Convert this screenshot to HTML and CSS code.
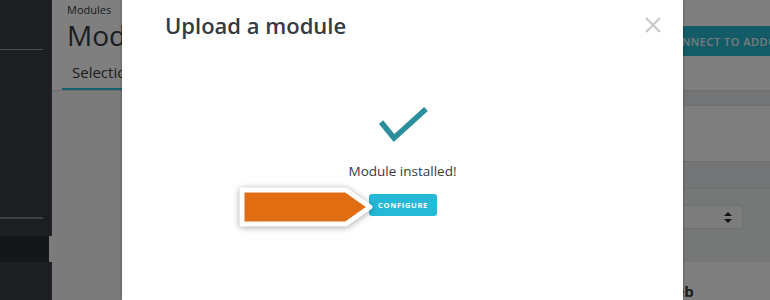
FILE: index.html
```html
<!DOCTYPE html>
<html>
<head>
<meta charset="utf-8">
<link rel="stylesheet" href="styles.css">
</head>
<body>
<div class="page">
  <aside class="sidebar">
    <div class="side-sep first"></div>
    <div class="side-sep second"></div>
    <div class="side-item active"><span class="side-marker"></span></div>
  </aside>
  <main class="main">
    <header class="header">
      <div class="header-left">
        <div class="crumb">Modules</div>
        <h1 class="page-title">Module manager</h1>
        <nav class="tabs"><span class="tab active">Selection</span><span class="tab">Popular</span></nav>
      </div>
      <div class="addons-btn">CONNECT TO ADDONS MARKETPLACE</div>
    </header>
    <section class="content">
      <div class="panel">
        <div class="panel-band top"></div>
        <div class="panel-body"></div>
        <div class="panel-band mid"></div>
        <div class="panel-filter">
          <div class="select"><span class="select-arrows">
            <svg width="8" height="11" viewBox="0 0 8 11"><path d="M4 0 L8 4 L0 4 Z M0 7 L8 7 L4 11 Z" fill="#222"/></svg>
          </span></div>
        </div>
        <div class="panel-foot"><span class="foot-label">Web</span></div>
      </div>
    </section>
  </main>
</div>
<div class="backdrop"></div>
<div class="modal">
  <div class="modal-head">
    <h2 class="modal-title">Upload a module</h2>
    <span class="close">
      <svg width="16" height="16" viewBox="0 0 16 16"><path d="M1 1 L15 15 M15 1 L1 15" stroke="#c9c9c9" stroke-width="2.2" fill="none"/></svg>
    </span>
  </div>
  <div class="modal-body">
    <svg class="check" width="50" height="38" viewBox="0 0 50 38"><path d="M2 16 L15 32 L47 3" stroke="#2a8e9d" stroke-width="5.5" fill="none"/></svg>
    <p class="installed">Module installed!</p>
    <button class="configure">CONFIGURE</button>
  </div>
</div>
<svg class="callout" width="140" height="50" viewBox="0 0 140 50">
  <path d="M4 4 L108 4 L132 21 L108 38 L4 38 Z" fill="#e06d12" stroke="#ffffff" stroke-width="5" stroke-linejoin="round"/>
</svg>
</body>
</html>
```
FILE: styles.css
```css
* { box-sizing: border-box; }
html, body { margin: 0; padding: 0; }
body {
  width: 770px;
  height: 300px;
  overflow: hidden;
  position: relative;
  font-family: "Open Sans", "Liberation Sans", sans-serif;
  background: #f5f6f4;
}
.page {
  display: flex;
  width: 770px;
  height: 300px;
}
.sidebar {
  width: 52px;
  flex-shrink: 0;
  background: #393c43;
  border-right: 1px solid #4a4d55;
  display: flex;
  flex-direction: column;
}
.side-sep {
  width: 43px;
  height: 2px;
  background: #9aa2aa;
}
.side-sep.first { margin-top: 49px; height: 1px; }
.side-sep.second { margin-top: 167px; background: #7d848a; }
.side-item.active {
  margin-top: 17px;
  height: 26px;
  background: #2b2d31;
  display: flex;
  justify-content: flex-end;
  margin-right: -1px;
}
.side-marker {
  width: 3px;
  height: 26px;
  background: #f5f6f4;
}
.main {
  flex: 1;
  display: flex;
  flex-direction: column;
  min-width: 0;
}
.header {
  height: 91px;
  background: #ffffff;
  border-bottom: 1px solid #d6d8d9;
  display: flex;
  flex-shrink: 0;
}
.header-left {
  width: 601px;
  flex-shrink: 0;
  padding-left: 15px;
  overflow: hidden;
  white-space: nowrap;
}
.crumb {
  font-size: 11px;
  color: #363a41;
  margin-top: 3px;
  line-height: 14px;
}
.page-title {
  margin: 0;
  font-size: 28px;
  font-weight: 400;
  color: #363a41;
  line-height: 34px;
  margin-top: 1px;
}
.tabs {
  display: flex;
  margin-top: 10px;
  margin-left: -5px;
}
.tab {
  font-size: 15px;
  color: #363a41;
  padding: 0 20px 6px 10px;
  line-height: 20px;
  border-bottom: 3px solid transparent;
}
.tab.active { border-bottom-color: #2fc3dc; }
.addons-btn {
  flex-shrink: 0;
  width: max-content;
  margin-top: 26px;
  height: 30px;
  padding: 0 12px;
  display: flex;
  align-items: center;
  background: #25b6cf;
  color: #f0f6f8;
  font-size: 11px;
  font-weight: 600;
  letter-spacing: 0.5px;
  white-space: nowrap;
}
.content {
  flex: 1;
  display: flex;
  padding-left: 548px;
}
.panel {
  width: 230px;
  flex-shrink: 0;
  display: flex;
  flex-direction: column;
}
.panel-band.top {
  height: 15px;
  background: #e6e9ea;
  border-bottom: 1px solid #d5d9da;
}
.panel-body {
  height: 56px;
  background: #ffffff;
  border-bottom: 1px solid #d5d9da;
}
.panel-band.mid {
  height: 27px;
  background: #e6e9ea;
  border-bottom: 1px solid #dadedf;
}
.panel-filter {
  height: 73px;
  background: #eceeef;
  padding-top: 16px;
}
.select {
  width: 143px;
  height: 24px;
  background: #fafafa;
  border: 1px solid #d3e2e4;
  display: flex;
  align-items: center;
  justify-content: flex-end;
  padding-right: 10px;
}
.select-arrows { display: flex; }
.panel-foot {
  flex: 1;
  background: #ffffff;
  padding-left: 61px;
  padding-top: 18px;
}
.foot-label {
  font-size: 15px;
  font-weight: 700;
  color: #363a41;
}
.backdrop {
  position: absolute;
  inset: 0;
  background: rgba(0, 0, 0, 0.5);
}
.modal {
  position: absolute;
  left: 122px;
  top: 0;
  width: 561px;
  height: 300px;
  background: #ffffff;
  box-shadow: 0 0 3px rgba(0, 0, 0, 0.35);
  display: flex;
  flex-direction: column;
}
.modal-head {
  display: flex;
  justify-content: space-between;
  align-items: flex-start;
  padding: 10px 22px 0 43px;
}
.modal-title {
  margin: 0;
  font-size: 22px;
  font-weight: 600;
  color: #363a41;
  line-height: 30px;
}
.close {
  display: flex;
  margin-top: 7px;
}
.modal-body {
  display: flex;
  flex-direction: column;
  align-items: center;
  padding-top: 66px;
}
.check { display: block; margin-left: 2px; }
.installed {
  margin: 18px 0 0;
  font-size: 13.5px;
  color: #363a41;
  line-height: 18px;
}
.configure {
  margin-top: 14px;
  margin-left: 1px;
  width: 68px;
  height: 22px;
  border: none;
  border-radius: 3px;
  background: #25b9d7;
  color: #ffffff;
  font-family: "Open Sans", "Liberation Sans", sans-serif;
  font-size: 7.5px;
  font-weight: 700;
  letter-spacing: 0.7px;
  padding: 0;
}
.callout {
  position: absolute;
  left: 238px;
  top: 186px;
  filter: drop-shadow(0 1px 3px rgba(0, 0, 0, 0.35));
}
```
